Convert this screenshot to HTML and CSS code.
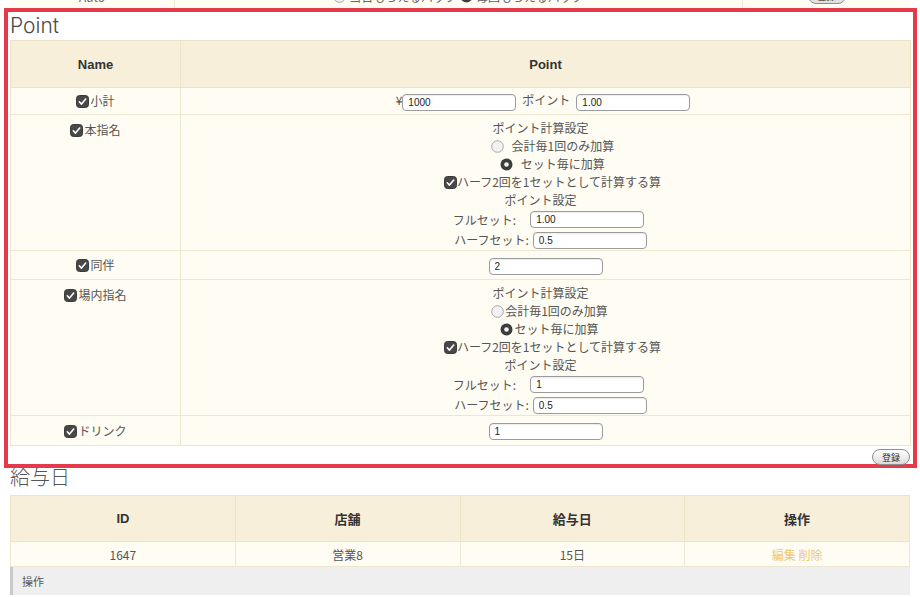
FILE: index.html
```html
<!DOCTYPE html>
<html lang="ja">
<head>
<meta charset="utf-8">
<title>Point</title>
<link rel="stylesheet" href="styles.css">
</head>
<body>
<div class="top-strip">
  <div class="strip-row">
    <div class="strip-cell">Auto</div>
    <div class="strip-cell"><svg class="rd" viewBox="0 0 13 13" width="13" height="13"><circle cx="6.5" cy="6.5" r="5.8" fill="#f2f2f2" stroke="#a6a6a6"/></svg> 当日もらえるバック <svg class="rd" viewBox="0 0 13 13" width="13" height="13"><circle cx="6.5" cy="6.5" r="6" fill="#3d3d3d"/><circle cx="6.5" cy="6.5" r="2.3" fill="#f4f4f4"/></svg>毎回もらえるバック</div>
    <div class="strip-cell"><span class="btn">登録</span></div>
  </div>
</div>

<section class="point-box">
  <h2 class="sec-title">Point</h2>
  <table class="grid point-table">
    <colgroup><col class="c-name"><col class="c-point"></colgroup>
    <thead>
      <tr class="h-row"><th>Name</th><th>Point</th></tr>
    </thead>
    <tbody>
      <tr class="r-sum">
        <td class="name"><svg class="cb" viewBox="0 0 13 13" width="13" height="13"><rect x="0.5" y="0.5" width="12" height="12" rx="3" fill="#484848" stroke="#3a3a3a"/><path d="M3.3 6.8l2.2 2.3 4.2-5" fill="none" stroke="#fff" stroke-width="1.6" stroke-linecap="round" stroke-linejoin="round"/></svg>小計</td>
        <td class="pt sum">¥<input class="inp" type="text" value="1000"><span class="pt-lbl">ポイント</span><input class="inp" type="text" value="1.00"></td>
      </tr>
      <tr>
        <td class="name top"><svg class="cb" viewBox="0 0 13 13" width="13" height="13"><rect x="0.5" y="0.5" width="12" height="12" rx="3" fill="#484848" stroke="#3a3a3a"/><path d="M3.3 6.8l2.2 2.3 4.2-5" fill="none" stroke="#fff" stroke-width="1.6" stroke-linecap="round" stroke-linejoin="round"/></svg>本指名</td>
        <td class="pt block">
          <div class="line sl">ポイント計算設定</div>
          <div class="line sr wide"><svg class="rd" viewBox="0 0 13 13" width="13" height="13"><circle cx="6.5" cy="6.5" r="5.8" fill="#f2f2f2" stroke="#a6a6a6"/></svg> 会計毎1回のみ加算</div>
          <div class="line sr wide"><svg class="rd" viewBox="0 0 13 13" width="13" height="13"><circle cx="6.5" cy="6.5" r="6" fill="#3d3d3d"/><circle cx="6.5" cy="6.5" r="2.3" fill="#f4f4f4"/></svg> セット毎に加算</div>
          <div class="line sr"><svg class="cb" viewBox="0 0 13 13" width="13" height="13"><rect x="0.5" y="0.5" width="12" height="12" rx="3" fill="#484848" stroke="#3a3a3a"/><path d="M3.3 6.8l2.2 2.3 4.2-5" fill="none" stroke="#fff" stroke-width="1.6" stroke-linecap="round" stroke-linejoin="round"/></svg>ハーフ2回を1セットとして計算する算</div>
          <div class="line sl">ポイント設定</div>
          <div class="iline full"><span class="lbl">フルセット:</span><input class="inp" type="text" value="1.00"></div>
          <div class="iline half"><span class="lbl">ハーフセット:</span><input class="inp" type="text" value="0.5"></div>
        </td>
      </tr>
      <tr class="r-mid">
        <td class="name"><svg class="cb" viewBox="0 0 13 13" width="13" height="13"><rect x="0.5" y="0.5" width="12" height="12" rx="3" fill="#484848" stroke="#3a3a3a"/><path d="M3.3 6.8l2.2 2.3 4.2-5" fill="none" stroke="#fff" stroke-width="1.6" stroke-linecap="round" stroke-linejoin="round"/></svg>同伴</td>
        <td class="pt"><input class="inp" type="text" value="2"></td>
      </tr>
      <tr>
        <td class="name top"><svg class="cb" viewBox="0 0 13 13" width="13" height="13"><rect x="0.5" y="0.5" width="12" height="12" rx="3" fill="#484848" stroke="#3a3a3a"/><path d="M3.3 6.8l2.2 2.3 4.2-5" fill="none" stroke="#fff" stroke-width="1.6" stroke-linecap="round" stroke-linejoin="round"/></svg>場内指名</td>
        <td class="pt block">
          <div class="line sl">ポイント計算設定</div>
          <div class="line sr2"><svg class="rd" viewBox="0 0 13 13" width="13" height="13"><circle cx="6.5" cy="6.5" r="5.8" fill="#f2f2f2" stroke="#a6a6a6"/></svg>会計毎1回のみ加算</div>
          <div class="line sr2"><svg class="rd" viewBox="0 0 13 13" width="13" height="13"><circle cx="6.5" cy="6.5" r="6" fill="#3d3d3d"/><circle cx="6.5" cy="6.5" r="2.3" fill="#f4f4f4"/></svg>セット毎に加算</div>
          <div class="line sr"><svg class="cb" viewBox="0 0 13 13" width="13" height="13"><rect x="0.5" y="0.5" width="12" height="12" rx="3" fill="#484848" stroke="#3a3a3a"/><path d="M3.3 6.8l2.2 2.3 4.2-5" fill="none" stroke="#fff" stroke-width="1.6" stroke-linecap="round" stroke-linejoin="round"/></svg>ハーフ2回を1セットとして計算する算</div>
          <div class="line sl">ポイント設定</div>
          <div class="iline full"><span class="lbl">フルセット:</span><input class="inp" type="text" value="1"></div>
          <div class="iline half"><span class="lbl">ハーフセット:</span><input class="inp" type="text" value="0.5"></div>
        </td>
      </tr>
      <tr class="r-last">
        <td class="name"><svg class="cb" viewBox="0 0 13 13" width="13" height="13"><rect x="0.5" y="0.5" width="12" height="12" rx="3" fill="#484848" stroke="#3a3a3a"/><path d="M3.3 6.8l2.2 2.3 4.2-5" fill="none" stroke="#fff" stroke-width="1.6" stroke-linecap="round" stroke-linejoin="round"/></svg>ドリンク</td>
        <td class="pt"><input class="inp" type="text" value="1"></td>
      </tr>
    </tbody>
  </table>
  <div class="box-footer"><button class="btn" type="button">登録</button></div>
</section>

<h2 class="sec-title pay-title">給与日</h2>
<table class="grid pay-table">
  <thead>
    <tr class="h-row2"><th>ID</th><th>店舗</th><th>給与日</th><th>操作</th></tr>
  </thead>
  <tbody>
    <tr class="r-pay"><td>1647</td><td>営業8</td><td>15日</td><td><a class="lnk" href="#">編集</a> <a class="lnk" href="#">削除</a></td></tr>
  </tbody>
</table>
<div class="ops-band">操作</div>
</body>
</html>
```

FILE: styles.css
```css
html, body {
  margin: 0;
  padding: 0;
  background: #ffffff;
}
body {
  font-family: "Liberation Sans", "Noto Sans CJK JP", sans-serif;
  color: #555555;
  font-size: 12px;
  width: 920px;
  height: 597px;
  overflow: hidden;
}

/* cut-off row at the very top */
.top-strip {
  height: 8px;
  overflow: hidden;
  margin: 0 10px;
}
.strip-row {
  display: grid;
  grid-template-columns: 165px 568px 167px;
  height: 24px;
  margin-top: -16px;
  background: #fffcf4;
}
.strip-cell {
  display: flex;
  align-items: center;
  justify-content: center;
  border-right: 1px solid #eee6d0;
  font-family: "Noto Sans CJK JP", sans-serif;
  font-size: 12px;
  color: #666;
  gap: 3px;
}
.strip-cell:last-child { border-right: 0; }

/* red framed Point section */
.point-box {
  margin-left: 4px;
  width: 913px;
  height: 460px;
  box-sizing: border-box;
  border: 4px solid #e43a4c;
  padding: 0 2px;
}
.sec-title {
  margin: 0;
  font-family: "Inter", "Noto Sans CJK JP", sans-serif;
  font-weight: 300;
  font-size: 21px;
  line-height: 28px;
  color: #4a4a4a;
}
.pay-title {
  margin: 0 0 7px 10px;
  font-size: 20px;
  line-height: 20px;
  color: #555;
}

.grid {
  border-collapse: collapse;
  table-layout: fixed;
  width: 900px;
}
.grid th {
  background: #f8efda;
  border: 1px solid #ece3c9;
  font-family: "Liberation Sans", "Noto Sans CJK JP", sans-serif;
  font-weight: bold;
  font-size: 13px;
  color: #333;
  padding: 0;
}
.grid td {
  background: #fffcf3;
  border: 1px solid #eee6d0;
  font-family: "Noto Sans CJK JP", sans-serif;
  font-size: 12px;
  color: #555;
  text-align: center;
  padding: 0;
}
.c-name { width: 170px; }
.c-point { width: 730px; }
.h-row { height: 47px; }
.r-sum { height: 27px; }
.r-mid { height: 29px; }
.r-last { height: 30px; }

.name.top {
  vertical-align: top;
  padding-top: 6px;
}
.name {
  line-height: 18px;
}
.cb, .rd {
  display: inline-block;
  vertical-align: -2px;
}
.name .cb { margin-right: 1px; }

.pt { line-height: 18px; }
.pt.sum { padding-right: 5px; }
.pt-lbl { margin: 0 6px; }
.pt.block {
  padding: 4px 0 0;
  vertical-align: top;
}
.line {
  height: 18px;
  line-height: 18px;
}
.line.sl { padding-right: 10px; }
.line.sr { padding-left: 14px; }
.line.sr2 { padding-left: 8px; }
.line .rd { margin-right: 1px; }
.line.wide .rd { margin-right: 5px; }
.iline {
  height: 21px;
  display: flex;
  align-items: center;
  justify-content: center;
}
.iline.half { height: 20px; }
.iline.full { padding-left: 6px; }
.iline.full .lbl { margin-right: 14px; }
.iline.half { padding-left: 10px; }
.iline.half .lbl { margin-right: 4px; }

.inp {
  width: 114px;
  height: 17px;
  box-sizing: border-box;
  border: 1px solid #9b9b9b;
  border-radius: 4px;
  background: #fff;
  font-family: "Liberation Sans", sans-serif;
  font-size: 10px;
  color: #222;
  padding: 0 5px;
  margin: 0;
  vertical-align: middle;
  box-shadow: inset 0 1px 1px rgba(0,0,0,0.08);
}

.box-footer {
  display: flex;
  justify-content: flex-end;
  padding: 3px 1px 0 0;
}
.btn {
  display: inline-flex;
  align-items: center;
  justify-content: center;
  width: 38px;
  height: 16px;
  box-sizing: border-box;
  border: 1px solid #8e8e8e;
  border-radius: 8px;
  background: linear-gradient(#ffffff, #dcdcdc);
  font-family: "Noto Sans CJK JP", sans-serif;
  font-size: 9px;
  color: #333;
  padding: 0;
  margin: 0;
}

/* pay day table */
.pay-table {
  margin-left: 10px;
}
.h-row2 { height: 46px; }
.r-pay { height: 25px; }
.r-pay td { color: #555; }
.lnk {
  color: #efc674;
  text-decoration: none;
}
.ops-band {
  margin-left: 10px;
  width: 900px;
  height: 28px;
  box-sizing: border-box;
  background: #efefef;
  border-left: 3px solid #c9c9c9;
  padding-left: 9px;
  line-height: 28px;
  font-family: "Noto Sans CJK JP", sans-serif;
  font-size: 11px;
  color: #555;
}
```
